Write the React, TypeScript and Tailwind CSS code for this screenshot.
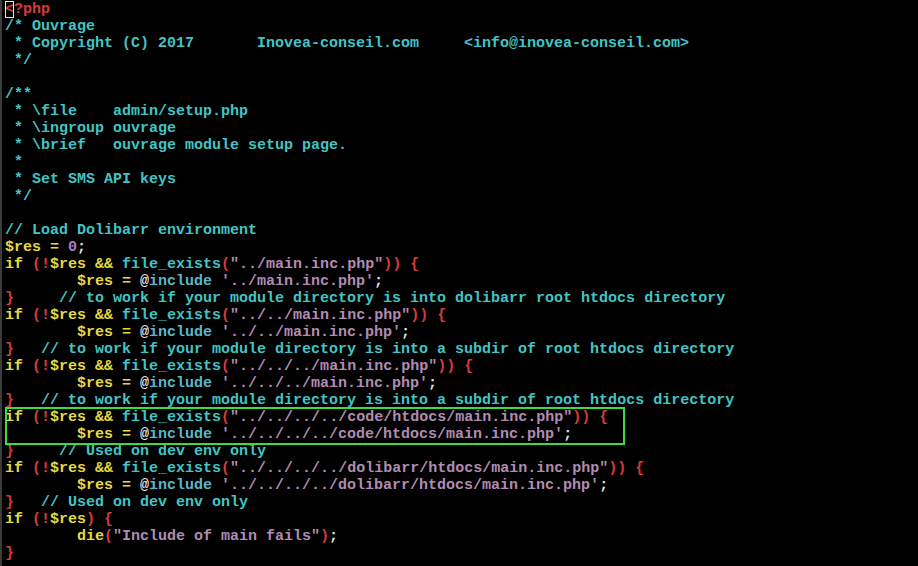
type Seg = [string, string];

const R = "text-[#d63a3a]";
const Y = "text-[#e4da44]";
const C = "text-[#43c4c6]";
const K = "text-[#5cb6c8]";
const S = "text-[#b18cb2]";
const W = "text-[#e2e2e2]";
const N = "text-[#a981c4]";

const ifLine = (path: string): Seg[] => [
  ["if ", Y],
  ["(!", R],
  ["$res ", Y],
  ["&& ", Y],
  ["file_exists", C],
  ["(", R],
  [`"${path}"`, S],
  [")) {", R],
];

const incLine = (path: string): Seg[] => [
  ["        ", W],
  ["$res = ", Y],
  ["@", W],
  ["include ", K],
  [`'${path}'`, S],
  [";", W],
];

const closeLine = (gap: string, text: string): Seg[] => [
  ["}", R],
  [gap, W],
  [text, C],
];

const lines: Seg[][] = [
  [["<?php", R]],
  [["/* Ouvrage", C]],
  [[" * Copyright (C) 2017       Inovea-conseil.com     <info@inovea-conseil.com>", C]],
  [[" */", C]],
  [],
  [["/**", C]],
  [[" * \\file    admin/setup.php", C]],
  [[" * \\ingroup ouvrage", C]],
  [[" * \\brief   ouvrage module setup page.", C]],
  [[" *", C]],
  [[" * Set SMS API keys", C]],
  [[" */", C]],
  [],
  [["// Load Dolibarr environment", C]],
  [["$res = ", Y], ["0", N], [";", W]],
  ifLine("../main.inc.php"),
  incLine("../main.inc.php"),
  closeLine("     ", "// to work if your module directory is into dolibarr root htdocs directory"),
  ifLine("../../main.inc.php"),
  incLine("../../main.inc.php"),
  closeLine("   ", "// to work if your module directory is into a subdir of root htdocs directory"),
  ifLine("../../../main.inc.php"),
  incLine("../../../main.inc.php"),
  closeLine("   ", "// to work if your module directory is into a subdir of root htdocs directory"),
  ifLine("../../../../code/htdocs/main.inc.php"),
  incLine("../../../../code/htdocs/main.inc.php"),
  closeLine("     ", "// Used on dev env only"),
  ifLine("../../../../dolibarr/htdocs/main.inc.php"),
  incLine("../../../../dolibarr/htdocs/main.inc.php"),
  closeLine("   ", "// Used on dev env only"),
  [["if ", Y], ["(!", R], ["$res", Y], [") {", R]],
  [["        ", W], ["die", Y], ["(", R], ['"Include of main fails"', S], [")", R], [";", W]],
  [["}", R]],
];

function Line({ segs, first }: { segs: Seg[]; first?: boolean }) {
  return (
    <div className="h-[17px] leading-[17px] whitespace-pre">
      {segs.length === 0 && " "}
      {segs.map(([t, cls], i) =>
        first && i === 0 ? (
          <span key={i} className={cls}>
            <span className="outline outline-1 outline-[#e8e8e8] -outline-offset-1">{t[0]}</span>
            {t.slice(1)}
          </span>
        ) : (
          <span key={i} className={cls}>
            {t}
          </span>
        ),
      )}
    </div>
  );
}

export default function App() {
  return (
    <div className="w-[918px] h-[566px] bg-black overflow-hidden flex">
      <div className="w-[2px] h-full bg-[#3c3c3c]" />
      <div
        className="relative pl-[3px] pt-[1px] text-[15px] font-bold"
        style={{ fontFamily: '"Liberation Mono", "Courier New", monospace' }}
      >
        {lines.map((segs, i) => (
          <Line key={i} segs={segs} first={i === 0} />
        ))}
        {/* highlight box around the dev-env include */}
        <div className="absolute left-[3px] top-[407px] w-[620px] h-[38px] border-2 border-[#3ddc3a] pointer-events-none" />
      </div>
    </div>
  );
}
